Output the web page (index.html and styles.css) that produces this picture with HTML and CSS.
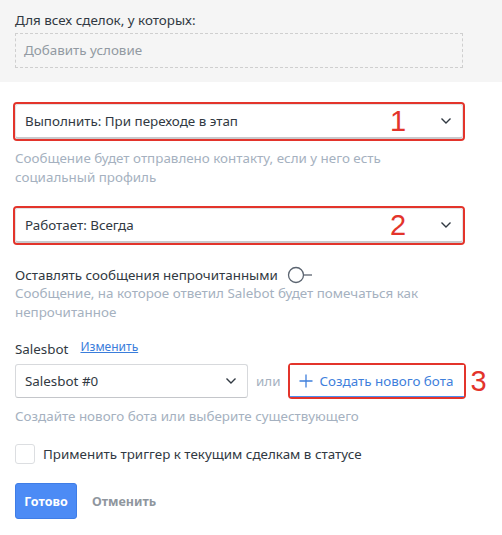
FILE: index.html
```html
<!DOCTYPE html>
<html lang="ru">
<head>
<meta charset="utf-8">
<link rel="stylesheet" href="styles.css">
</head>
<body>
<div class="filter">
  <div class="filter-label">Для всех сделок, у которых:</div>
  <div class="condition">Добавить условие</div>
</div>
<div class="form">
  <div class="mark-row">
    <div class="redbox wide">
      <div class="select">
        <span>Выполнить: При переходе в этап</span>
        <span class="num num-in">1</span>
        <svg class="chev" width="12" height="8" viewBox="0 0 12 8"><path d="M1.5 1.5 L6 6 L10.5 1.5" fill="none" stroke="#313942" stroke-width="1.4"/></svg>
      </div>
    </div>
  </div>
  <div class="hint h1">Сообщение будет отправлено контакту, если у него есть<br>социальный профиль</div>
  <div class="mark-row r2">
    <div class="redbox wide">
      <div class="select">
        <span>Работает: Всегда</span>
        <span class="num num-in">2</span>
        <svg class="chev" width="12" height="8" viewBox="0 0 12 8"><path d="M1.5 1.5 L6 6 L10.5 1.5" fill="none" stroke="#313942" stroke-width="1.4"/></svg>
      </div>
    </div>
  </div>
  <div class="toggle-row">
    <span>Оставлять сообщения непрочитанными</span>
    <svg class="toggle" width="26" height="18" viewBox="0 0 26 18"><circle cx="9" cy="9" r="7.5" fill="#fff" stroke="#5b6470" stroke-width="1.3"/><path d="M16.5 9 H25" stroke="#5b6470" stroke-width="1.3"/></svg>
  </div>
  <div class="hint h2">Сообщение, на которое ответил Salebot будет помечаться как<br>непрочитанное</div>
  <div class="sb-label"><span>Salesbot</span><a class="link">Изменить</a></div>
  <div class="bot-row">
    <div class="select bot-select">
      <span>Salesbot #0</span>
      <svg class="chev" width="12" height="8" viewBox="0 0 12 8"><path d="M1.5 1.5 L6 6 L10.5 1.5" fill="none" stroke="#313942" stroke-width="1.4"/></svg>
    </div>
    <span class="or">или</span>
    <div class="redbox create-box">
      <div class="create"><svg width="14" height="14" viewBox="0 0 14 14"><path d="M7 0.5 V13.5 M0.5 7 H13.5" stroke="#3f7fdc" stroke-width="1.3"/></svg><span>Создать нового бота</span></div>
    </div>
    <span class="num num-out">3</span>
  </div>
  <div class="hint h3">Создайте нового бота или выберите существующего</div>
  <label class="check-row"><span class="checkbox"></span><span>Применить триггер к текущим сделкам в статусе</span></label>
  <div class="actions">
    <button class="btn-primary">Готово</button>
    <button class="btn-cancel">Отменить</button>
  </div>
</div>
</body>
</html>
```
FILE: styles.css
```css
html, body {
  margin: 0;
  padding: 0;
  background: #fff;
}
body {
  width: 502px;
  font-family: "Noto Sans", "Open Sans", sans-serif;
  font-size: 13.4px;
  color: #313942;
}
.filter {
  background: #f5f5f5;
  padding: 11px 0 14px 15px;
  height: 57px;
}
.filter-label {
  line-height: 18px;
  color: #313942;
}
.condition {
  margin-top: 4px;
  width: 438px;
  height: 33px;
  border: 1px dashed #cfcfcf;
  padding-left: 8px;
  line-height: 33px;
  color: #929aa2;
}
.form {
  padding: 20px 0 0 13px;
}
.redbox {
  border: 2.5px solid #e3342b;
  border-radius: 4px;
  box-sizing: border-box;
}
.wide {
  width: 452px;
}
.select {
  position: relative;
  display: flex;
  align-items: center;
  height: 33px;
  background: #fff;
  border: 1px solid #d7d9dc;
  border-bottom-color: #c4c6ca;
  border-radius: 3px;
  padding: 0 10px 0 9px;
  box-sizing: border-box;
  color: #313942;
}
.redbox .select {
  border-color: #e2e3e5;
  border-bottom: 2px solid #c9c9cc;
  height: 35px;
}
.chev {
  margin-left: auto;
}
.num {
  color: #e3342b;
  font-family: "Liberation Sans", sans-serif;
  font-size: 29px;
  line-height: 29px;
}
.num-in {
  position: absolute;
  left: 374px;
  top: 2px;
}
.hint {
  color: #a5b1c0;
  line-height: 19px;
  margin-left: 2px;
}
.h1 {
  margin-top: 8px;
}
.r2 {
  margin-top: 19px;
}
.toggle-row {
  display: flex;
  align-items: center;
  margin: 20px 0 0 2px;
  line-height: 20px;
}
.toggle {
  margin-left: 9px;
}
.h2 {
  margin-top: -1px;
}
.sb-label {
  margin: 17px 0 0 2px;
  display: flex;
  align-items: center;
  line-height: 20px;
}
.link {
  margin-left: 12px;
  color: #3a7ddb;
  text-decoration: underline;
  font-size: 12px;
  position: relative;
  top: -2px;
}
.bot-row {
  display: flex;
  align-items: center;
  margin: 4px 0 0 2px;
}
.bot-select {
  width: 233px;
  height: 34px;
}
.or {
  color: #a5b1c0;
  margin: 0 7px 0 8px;
}
.create-box {
  width: 178px;
  height: 36px;
}
.create {
  display: flex;
  align-items: center;
  height: 31px;
  padding-left: 9px;
  background: #fff;
  border-bottom: 1.5px solid #4d8ef0;
  color: #3f7fdc;
}
.create svg {
  margin-right: 7px;
}
.num-out {
  margin-left: 5px;
}
.h3 {
  margin-top: 8px;
}
.check-row {
  display: flex;
  align-items: center;
  margin: 18px 0 0 2px;
  line-height: 20px;
}
.checkbox {
  width: 18px;
  height: 18px;
  border: 1px solid #dcdee1;
  border-radius: 3px;
  margin-right: 8px;
  background: #fff;
}
.actions {
  display: flex;
  align-items: center;
  margin: 19px 0 0 2px;
}
.btn-primary {
  width: 62px;
  height: 36px;
  background: #4c8bf5;
  border: 1px solid #3f7de6;
  border-radius: 3px;
  color: #fff;
  font-family: "Noto Sans", sans-serif;
  font-weight: 700;
  font-size: 12.5px;
  padding: 0;
}
.btn-cancel {
  background: none;
  border: none;
  margin-left: 10px;
  color: #8f969e;
  font-family: "Noto Sans", sans-serif;
  font-weight: 700;
  font-size: 12.5px;
  padding: 0 5px;
}
```
